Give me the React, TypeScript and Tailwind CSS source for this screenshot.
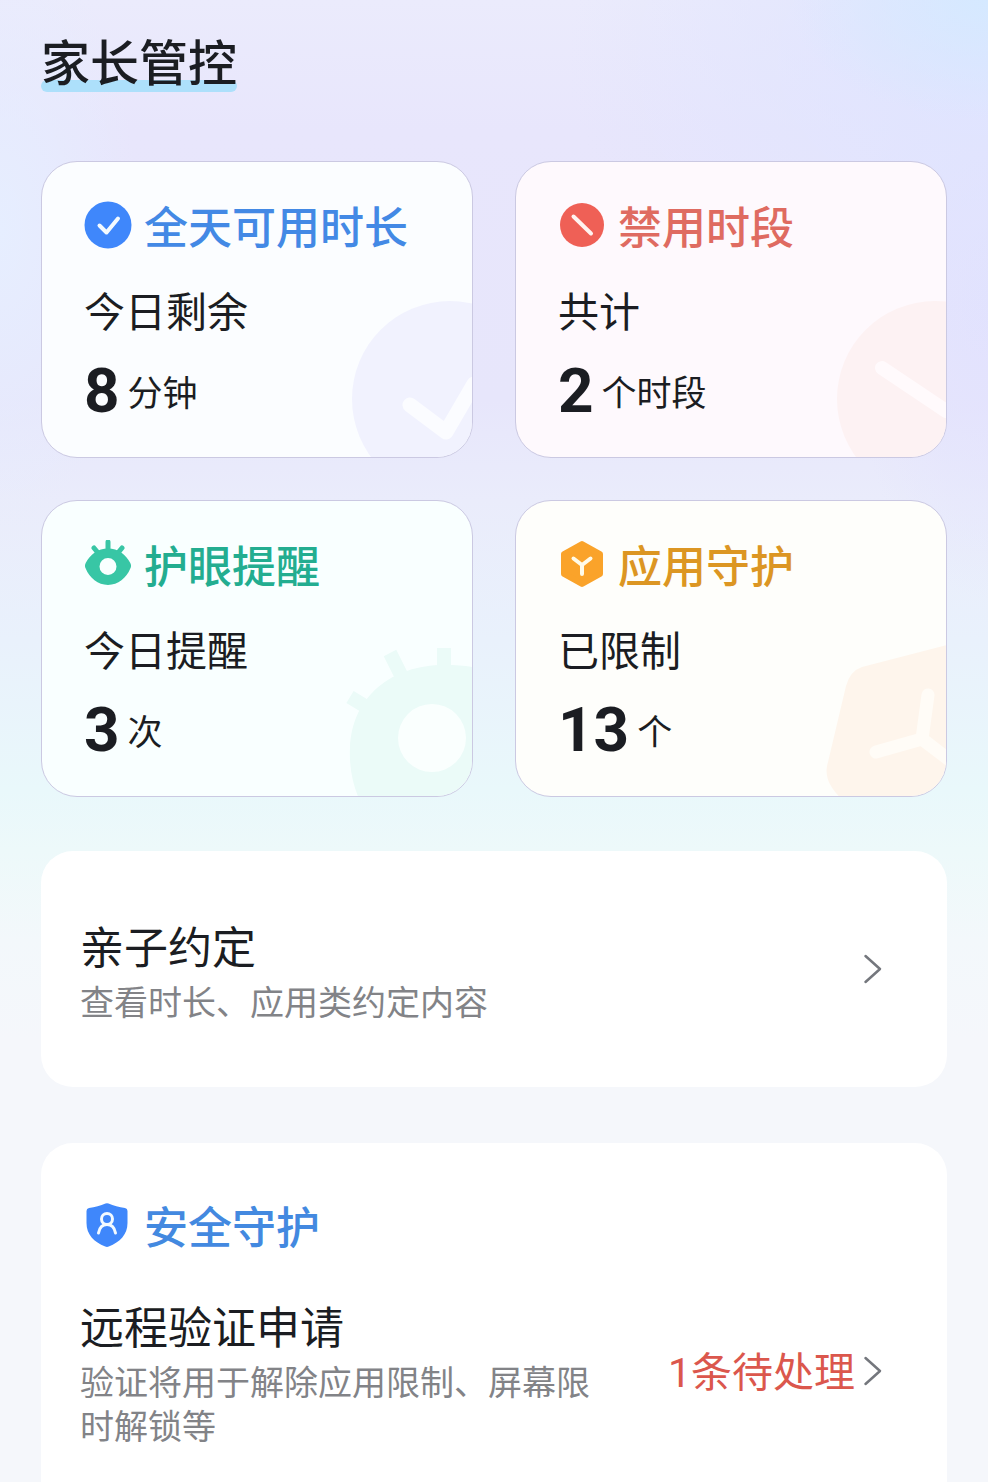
import type { ReactNode } from 'react';

type StatCardProps = {
  title: string;
  titleClass: string;
  cardClass: string;
  label: string;
  value: string;
  unit: string;
  icon: ReactNode;
  watermark: ReactNode;
};

function CheckIcon() {
  return (
    <svg viewBox="0 0 48 48" className="size-12 shrink-0" aria-hidden="true">
      <circle cx="24" cy="24" r="23.5" fill="#3f87fb" />
      <path d="M15.500 24.500l7 7 11.500-14" fill="none" stroke="#f3faff" strokeWidth="4" strokeLinecap="round" strokeLinejoin="round" />
    </svg>
  );
}

function BlockIcon() {
  return (
    <svg viewBox="0 0 48 48" className="size-12 shrink-0" aria-hidden="true">
      <circle cx="24" cy="24" r="22" fill="#ef6056" />
      <path d="M15.500 15.500l17.500 17" fill="none" stroke="#fff3f0" strokeWidth="4" strokeLinecap="round" />
    </svg>
  );
}

function EyeIcon() {
  return (
    <svg viewBox="0 0 48 48" className="size-12 shrink-0" aria-hidden="true">
      <path d="M24 2v10M10 8l5 6M38 8l-5 6" stroke="#38c6a5" strokeWidth="5" strokeLinecap="round" />
      <path
        fillRule="evenodd"
        d="M24 8.500c10 0 18 6 22.300 14.500 1 2 1 3.600 0 5.600C42.500 38 34 45 24 45S5.500 38 1.700 28.600c-1-2-1-3.600 0-5.600C6 14.500 14 8.500 24 8.500zM24 18a8.500 8.500 0 1 0 0 17 8.500 8.500 0 0 0 0-17z"
        fill="#38c6a5"
      />
    </svg>
  );
}

function HexIcon() {
  return (
    <svg viewBox="0 0 48 48" className="size-12 shrink-0" aria-hidden="true">
      <path d="M24 4l18 10v20l-18 10-18-10v-20z" fill="#faa32a" stroke="#faa32a" strokeWidth="6" strokeLinejoin="round" />
      <path d="M15.500 18.500l8.500 6.500 8.500-6.500M24 25v9" fill="none" stroke="#fffbe9" strokeWidth="4" strokeLinecap="round" strokeLinejoin="round" />
    </svg>
  );
}

function ShieldIcon() {
  return (
    <svg viewBox="0 0 48 48" className="size-12 shrink-0" aria-hidden="true">
      <path
        d="M21.500 2.600q1.500-.6 3 0c5 2 10.500 3.600 16.500 4.400q2.500.4 2.500 3V22c0 11.500-7.500 19-18.700 23.600q-1.800.8-3.600 0C10 41 2.500 33.500 2.500 22V10q0-2.600 2.500-3c6-.8 11.500-2.400 16.500-4.400z"
        fill="#3f87fb"
      />
      <circle cx="23" cy="18" r="5.500" fill="none" stroke="#f3faff" strokeWidth="3" />
      <path d="M14.500 32c1-5.500 4-8.500 8.500-8.500s7.500 3 8.500 8.500" fill="none" stroke="#f3faff" strokeWidth="3" strokeLinecap="round" />
    </svg>
  );
}

function Chevron() {
  return (
    <svg viewBox="0 0 20 30" className="h-[30px] w-5 shrink-0" aria-hidden="true">
      <path d="M2.500 2l14.500 13-14.500 13" fill="none" stroke="#74777d" strokeWidth="2.500" strokeLinecap="round" strokeLinejoin="round" />
    </svg>
  );
}

const checkMark = (
  <>
    <circle cx="98" cy="102" r="98" fill="#f1f2fe" />
    <path d="M58 108l36 27 28-48" fill="none" stroke="#fbfcff" strokeWidth="15" strokeLinecap="round" strokeLinejoin="round" />
  </>
);

const blockMark = (
  <>
    <circle cx="109" cy="102" r="98" fill="#fdf2f3" />
    <path d="M56 71l64 43" stroke="#fffafc" strokeWidth="14" strokeLinecap="round" />
  </>
);

const eyeMark = (
  <>
    <path d="M-2 61l28 17M38 17l14 28M92 12v24" stroke="#ebfbf8" strokeWidth="14" />
    <path d="M-2 112C0 60 40 29 92 29c20 0 32 2 44 6v130H8C1 150-3 132-2 112z" fill="#ebfbf8" />
    <circle cx="80" cy="102" r="34" fill="#fafffe" />
  </>
);

const hexMark = (
  <>
    <path d="M36 31l100-26v170H28C10 158-4 146 2 126L20 50q4-15 16-19z" fill="#fef5ec" />
    <path d="M102 59l-6 44-46 13M96 103l34 26" fill="none" stroke="#fffcf7" strokeWidth="13" strokeLinecap="round" strokeLinejoin="round" />
  </>
);

function StatCard({ title, titleClass, cardClass, label, value, unit, icon, watermark }: StatCardProps) {
  return (
    <a href="#" className={`relative block overflow-hidden rounded-[36px] border border-[#cbc9e2] px-[42px] pt-[35px] pb-[34px] ${cardClass}`}>
      <svg viewBox="0 0 120 160" className="absolute right-0 bottom-0 h-40 w-[120px] overflow-visible" aria-hidden="true">
        {watermark}
      </svg>
      <div className="relative">
        <div className="flex h-14 items-center gap-3">
          {icon}
          <h2 className={`text-[44px] leading-[56px] font-medium whitespace-nowrap ${titleClass}`}>{title}</h2>
        </div>
        <p className="mt-7 text-[41px] leading-[56px]">{label}</p>
        <p className="mt-[22px] flex h-16 items-center gap-2">
          <span className="font-[Roboto] text-[62px] leading-[64px] font-bold">{value}</span>
          <span className="text-[35px] leading-[64px]">{unit}</span>
        </p>
      </div>
    </a>
  );
}

export default function App() {
  return (
    <main
      className="flex min-h-screen flex-col bg-[#f5f7fb] bg-[radial-gradient(ellipse_200px_120px_at_100%_0px,#d5e9ff_0%,transparent_100%),radial-gradient(ellipse_420px_300px_at_100%_60px,#dfe4ff_0%,transparent_100%),radial-gradient(ellipse_140px_300px_at_0px_230px,#e6eeff_0%,transparent_100%),radial-gradient(ellipse_140px_300px_at_100%_300px,#e2e2fe_0%,transparent_100%),linear-gradient(180deg,#ebebfc_0px,#e8e6fc_130px,#e7e6fb_400px,#eaecfb_500px,#e9f1fc_640px,#e9f8fb_790px,#edf9fa_850px,#f3f8fb_940px,#f5f7fb_1040px)] px-[41px] text-[#1b1d22]"
      style={{ fontFamily: '"Noto Sans CJK SC", sans-serif' }}
    >
      <header className="flex pt-[26px]">
        <h1 className="relative text-[49px] leading-[68px] font-medium whitespace-nowrap">
          <span className="absolute inset-x-0 bottom-0.5 h-3 rounded-full bg-[#ade0fb]" />
          <span className="relative">家长管控</span>
        </h1>
      </header>

      <section className="mt-[67px] grid grid-cols-2 gap-[42px]">
        <StatCard title="全天可用时长" titleClass="text-[#4389e5]" cardClass="bg-[#fbfdff]" label="今日剩余" value="8" unit="分钟" icon={<CheckIcon />} watermark={checkMark} />
        <StatCard title="禁用时段" titleClass="text-[#df6b61]" cardClass="bg-[#fef9fd]" label="共计" value="2" unit="个时段" icon={<BlockIcon />} watermark={blockMark} />
        <StatCard title="护眼提醒" titleClass="text-[#23ad90]" cardClass="bg-[#f9ffff]" label="今日提醒" value="3" unit="次" icon={<EyeIcon />} watermark={eyeMark} />
        <StatCard title="应用守护" titleClass="text-[#dc9623]" cardClass="bg-[#fefefb]" label="已限制" value="13" unit="个" icon={<HexIcon />} watermark={hexMark} />
      </section>

      <a href="#" className="mt-[54px] flex items-center justify-between rounded-[32px] bg-white py-16 pr-16 pl-[39px]">
        <div>
          <h2 className="text-[44px] leading-[60px]">亲子约定</h2>
          <p className="mt-1 text-[34px] leading-[44px] text-[#828387]">查看时长、应用类约定内容</p>
        </div>
        <Chevron />
      </a>

      <section className="mt-14 flex-1 rounded-t-[32px] bg-white pt-[54px] pr-16 pb-6 pl-[39px]">
        <div className="flex h-14 items-center gap-3 pl-1">
          <ShieldIcon />
          <h2 className="text-[44px] leading-[56px] font-medium text-[#4389e0]">安全守护</h2>
        </div>
        <a href="#" className="mt-[42px] flex items-center justify-between gap-6">
          <div className="max-w-[530px]">
            <h3 className="text-[44px] leading-[60px]">远程验证申请</h3>
            <p className="mt-1 text-[34px] leading-[44px] text-[#828387]">验证将用于解除应用限制、屏幕限时解锁等</p>
          </div>
          <div className="flex items-center gap-2 text-[41px] leading-[56px] whitespace-nowrap text-[#db574d]">
            <span>
              <span className="font-[Roboto]">1</span>条待处理
            </span>
            <Chevron />
          </div>
        </a>
      </section>
    </main>
  );
}
